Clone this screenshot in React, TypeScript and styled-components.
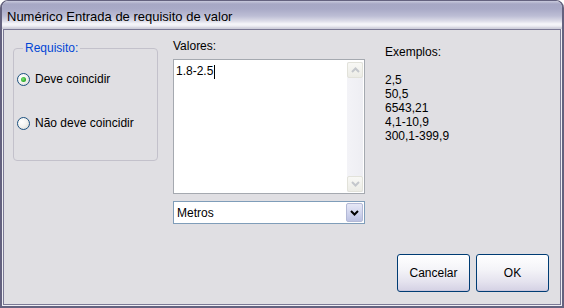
import React from 'react';
import styled, { createGlobalStyle } from 'styled-components';

const GlobalStyle = createGlobalStyle`
  html, body { margin: 0; padding: 0; background: #ffffff; }
  body { font-family: "Liberation Sans", Arial, sans-serif; font-size: 12px; color: #000; }
  * { box-sizing: border-box; }
`;

const Window = styled.div`
  width: 564px;
  height: 308px;
  display: flex;
  flex-direction: column;
  border-style: solid;
  border-color: #64627f;
  border-width: 1px 2px 2px 2px;
  border-radius: 8px 8px 0 0;
  background: #efeff4;
  padding: 0 1px 1px 1px;
  overflow: hidden;
`;

const TitleBar = styled.div`
  height: 28px;
  margin: 0 -1px;
  padding: 3px 0 0 5px;
  font-size: 13px;
  line-height: 25px;
  color: #000;
  white-space: nowrap;
  background: linear-gradient(
    to bottom,
    #c9cadd 0px,
    #a6a7c4 3px,
    #a9aac7 8px,
    #bdbed5 15px,
    #dcdce8 20px,
    #f6f6fa 23px,
    #eeeef4 25px,
    #cfcfdb 27px,
    #cfcfdb 28px
  );
`;

const Body = styled.div`
  flex: 1;
  background: #e0dfe3;
  border: 1px solid #7b7995;
  display: flex;
  flex-direction: column;
  padding: 0 11px 12px 9px;
`;

const TopRow = styled.div`
  display: flex;
  align-items: flex-start;
`;

const Group = styled.fieldset`
  margin: 11px 0 0 0;
  padding: 0 0 0 3px;
  width: 145px;
  height: 120px;
  border: 1px solid #c3c1cb;
  border-radius: 4px;
  display: flex;
  flex-direction: column;
`;

const Legend = styled.legend`
  margin-left: 6px;
  padding: 0 2px;
  color: #0046d5;
  line-height: 14px;
`;

const RadioRow = styled.label<{ $top: number }>`
  display: flex;
  align-items: center;
  gap: 5px;
  height: 16px;
  margin-top: ${p => p.$top}px;
  line-height: 16px;
  white-space: nowrap;
`;

const RadioCircle = styled.span<{ $checked?: boolean }>`
  width: 13px;
  height: 13px;
  border-radius: 50%;
  border: 1px solid #1c5180;
  background: radial-gradient(circle at 35% 35%, #ffffff 0%, #f4f4f1 45%, #d5d5cf 100%);
  display: flex;
  align-items: center;
  justify-content: center;
  flex: none;
  &::after {
    content: '';
    display: ${p => (p.$checked ? 'block' : 'none')};
    width: 5px;
    height: 5px;
    border-radius: 50%;
    background: radial-gradient(circle at 40% 40%, #7ee07a 0%, #2fb02b 60%, #1d8a1a 100%);
  }
`;

const MidColumn = styled.div`
  margin: 9px 0 0 15px;
  display: flex;
  flex-direction: column;
  width: 192px;
`;

const FieldLabel = styled.div`
  line-height: 14px;
  margin-bottom: 6px;
`;

const TextBox = styled.div`
  width: 192px;
  height: 135px;
  border: 1px solid #a5a9b0;
  background: #ffffff;
  display: flex;
  padding: 2px 1px 1px 0;
`;

const TextContent = styled.div`
  flex: 1;
  padding: 2px 0 0 2px;
  line-height: 15px;
  display: flex;
  align-items: flex-start;
`;

const Caret = styled.span`
  display: inline-block;
  width: 1px;
  height: 14px;
  margin-top: 1px;
  margin-left: 1px;
  background: #000;
`;

const ScrollBar = styled.div`
  width: 16px;
  display: flex;
  flex-direction: column;
  justify-content: space-between;
  background: linear-gradient(to right, #f3f3f7, #eeeef3);
`;

const ScrollButton = styled.div`
  width: 16px;
  height: 16px;
  border: 1px solid #e2e2da;
  border-radius: 2px;
  background: linear-gradient(to bottom, #f8f8f5, #ecece6);
  display: flex;
  align-items: center;
  justify-content: center;
`;

const Select = styled.div`
  margin-top: 7px;
  width: 192px;
  height: 23px;
  border: 1px solid #7f9db9;
  background: #ffffff;
  display: flex;
  align-items: center;
  padding: 1px 1px 1px 3px;
`;

const SelectText = styled.span`
  flex: 1;
  line-height: 19px;
  padding-top: 1px;
`;

const DropButton = styled.div`
  width: 17px;
  height: 19px;
  border: 1px solid #b3b9d6;
  border-radius: 2px;
  background: linear-gradient(to bottom, #e6e8f6 0%, #d2d6ee 50%, #bcc2e2 100%);
  display: flex;
  align-items: center;
  justify-content: center;
`;

const Examples = styled.div`
  margin: 15px 0 0 20px;
  line-height: 14px;
  display: flex;
  flex-direction: column;
`;

const ExampleLine = styled.div<{ $gap?: boolean }>`
  margin-top: ${p => (p.$gap ? '14px' : '0')};
  white-space: nowrap;
`;

const Spacer = styled.div`
  flex: 1;
`;

const ButtonRow = styled.div`
  display: flex;
  justify-content: flex-end;
  gap: 6px;
`;

const Button = styled.button`
  width: 73px;
  height: 38px;
  border: 1px solid #003c74;
  border-radius: 3px;
  background: linear-gradient(to bottom, #ffffff 0%, #f4f4f8 40%, #e4e2ee 75%, #d4d1e4 100%);
  box-shadow: inset 0 -1px 0 #c9c6dc;
  font-family: "Liberation Sans", Arial, sans-serif;
  font-size: 12px;
  color: #000;
  padding: 0;
`;

const ChevronUp = ({ color }: { color: string }) => (
  <svg width="9" height="6" viewBox="0 0 9 6">
    <path d="M1 5 L4.5 1.5 L8 5" fill="none" stroke={color} strokeWidth="2" />
  </svg>
);

const ChevronDown = ({ color, w = 9 }: { color: string; w?: number }) => (
  <svg width={w} height="6" viewBox="0 0 9 6">
    <path d="M1 1 L4.5 4.5 L8 1" fill="none" stroke={color} strokeWidth="2" />
  </svg>
);

export default function App() {
  const examples = ['2,5', '50,5', '6543,21', '4,1-10,9', '300,1-399,9'];
  return (
    <>
      <GlobalStyle />
      <Window>
        <TitleBar>Numérico Entrada de requisito de valor</TitleBar>
        <Body>
          <TopRow>
            <Group>
              <Legend>Requisito:</Legend>
              <RadioRow $top={16}>
                <RadioCircle $checked />
                Deve coincidir
              </RadioRow>
              <RadioRow $top={28}>
                <RadioCircle />
                Não deve coincidir
              </RadioRow>
            </Group>
            <MidColumn>
              <FieldLabel>Valores:</FieldLabel>
              <TextBox>
                <TextContent>
                  1.8-2.5
                  <Caret />
                </TextContent>
                <ScrollBar>
                  <ScrollButton>
                    <ChevronUp color="#c4c7cc" />
                  </ScrollButton>
                  <ScrollButton>
                    <ChevronDown color="#c4c7cc" />
                  </ScrollButton>
                </ScrollBar>
              </TextBox>
              <Select>
                <SelectText>Metros</SelectText>
                <DropButton>
                  <ChevronDown color="#000" />
                </DropButton>
              </Select>
            </MidColumn>
            <Examples>
              <ExampleLine>Exemplos:</ExampleLine>
              {examples.map((e, i) => (
                <ExampleLine key={e} $gap={i === 0}>
                  {e}
                </ExampleLine>
              ))}
            </Examples>
          </TopRow>
          <Spacer />
          <ButtonRow>
            <Button>Cancelar</Button>
            <Button>OK</Button>
          </ButtonRow>
        </Body>
      </Window>
    </>
  );
}
